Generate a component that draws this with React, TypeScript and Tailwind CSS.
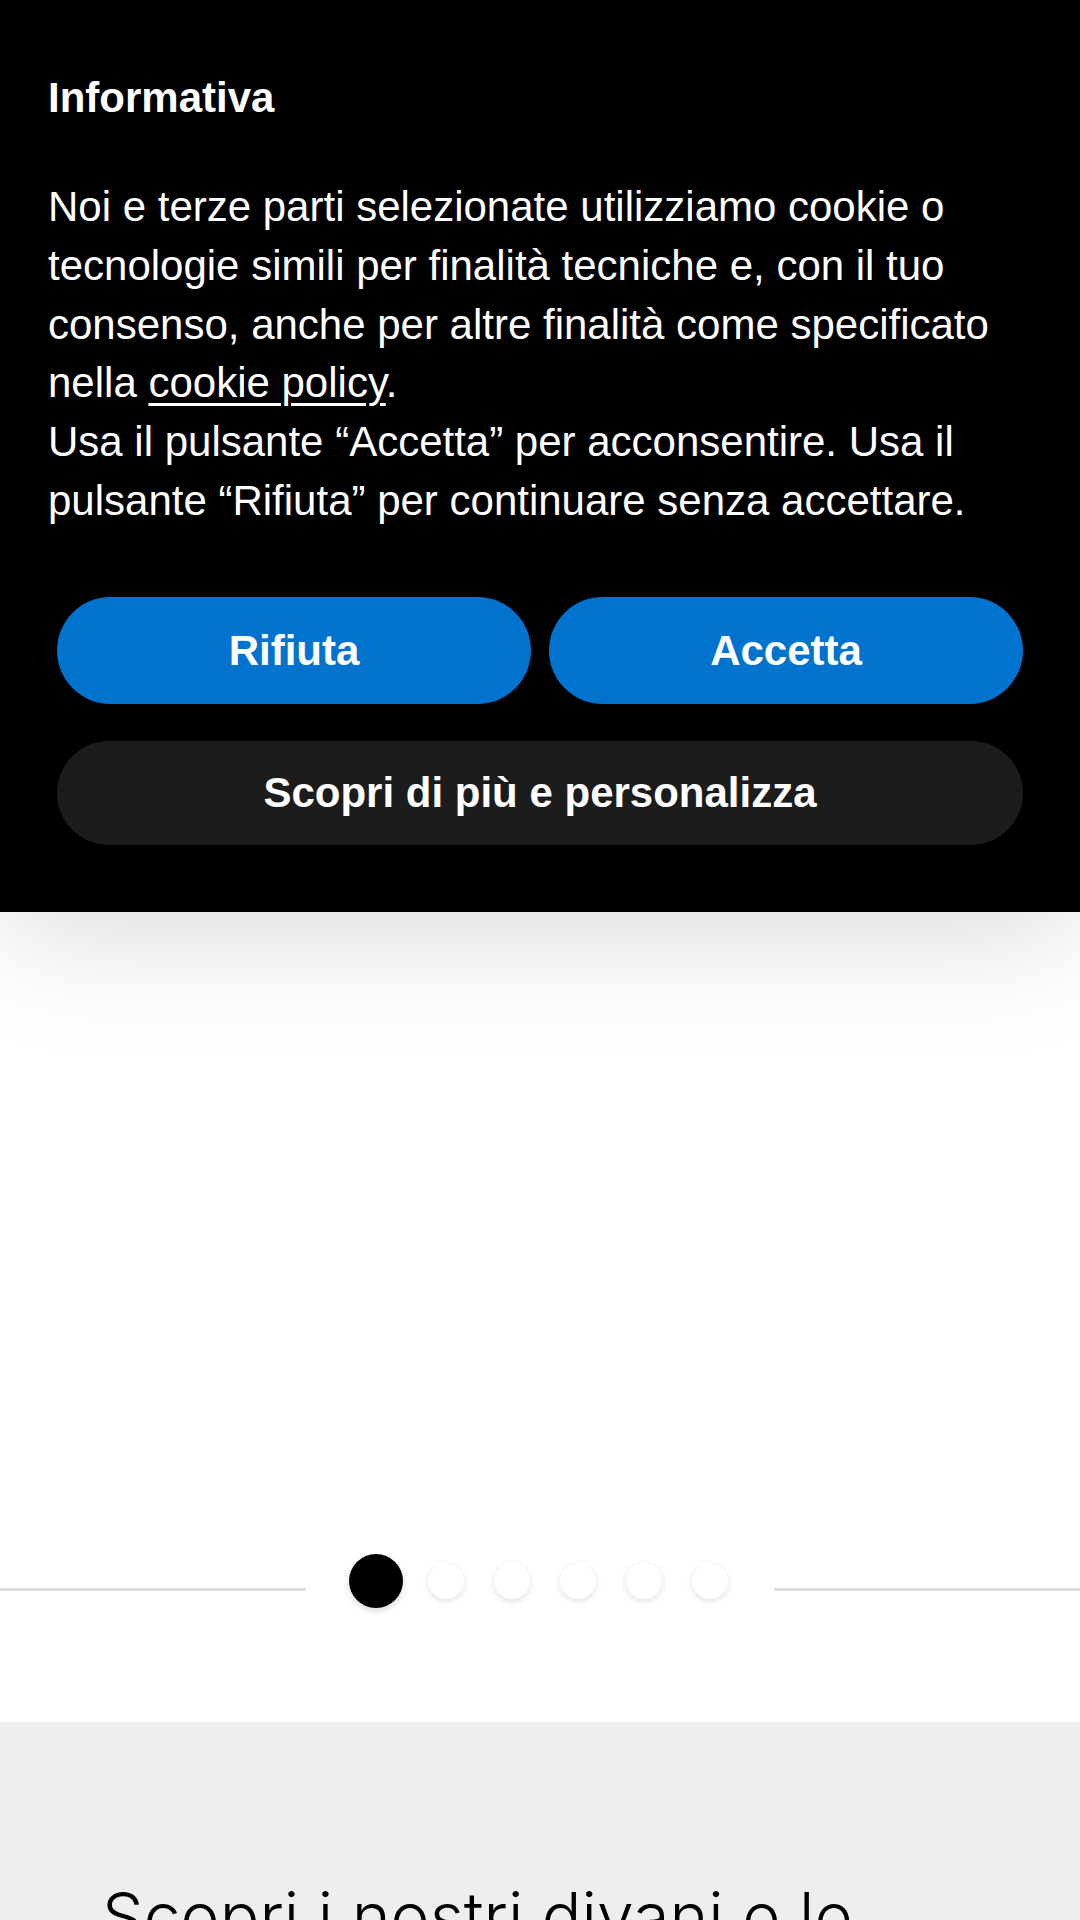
export default function App() {
  const dots = [0, 1, 2, 3, 4];

  return (
    <div className="w-[1080px] min-h-[1920px] bg-white overflow-hidden font-['Liberation_Sans',Arial,sans-serif]">
      {/* Cookie banner */}
      <section className="relative z-10 h-[912px] bg-black px-[48px] pt-[69px] text-white shadow-[0_20px_120px_rgba(0,0,0,0.15)]">
        <h2 className="text-[42px] font-bold leading-[58px]">Informativa</h2>
        <p className="mt-[51px] text-[42px] leading-[58.8px]">
          Noi e terze parti selezionate utilizziamo cookie o tecnologie simili
          per finalità tecniche e, con il tuo consenso, anche per altre
          finalità come specificato nella{" "}
          <a href="#" className="underline decoration-[3px] underline-offset-[6px]">
            cookie policy
          </a>
          .
          <br />
          Usa il pulsante “Accetta” per acconsentire. Usa il pulsante “Rifiuta”
          per continuare senza accettare.
        </p>

        {/* Actions */}
        <div className="mt-[66px] flex gap-[18px] px-[9px]">
          <button className="h-[107px] flex-1 rounded-full bg-[#0073ce] text-[42px] font-bold text-white">
            Rifiuta
          </button>
          <button className="h-[107px] flex-1 rounded-full bg-[#0073ce] text-[42px] font-bold text-white">
            Accetta
          </button>
        </div>
        <div className="mt-[37px] px-[9px]">
          <button className="h-[104px] w-full rounded-full bg-[#1c1c1c] text-[42px] font-bold text-white">
            Scopri di più e personalizza
          </button>
        </div>
      </section>

      {/* Carousel area */}
      <section className="flex h-[810px] flex-col justify-end pb-[114px]">
        <div className="flex h-[54px] items-center">
          <div className="mt-[16px] h-[3px] flex-1 bg-[#dddddd]" />
          <div className="flex items-center pl-[43px] pr-[46px]">
            <span className="h-[54px] w-[54px] rounded-full bg-black shadow-[0_3px_6px_rgba(0,0,0,0.15)]" />
            {dots.map((d) => (
              <span
                key={d}
                className={
                  d === 0
                    ? "ml-[25px] h-[36px] w-[36px] rounded-full bg-white shadow-[0_2px_6px_rgba(0,0,0,0.12)]"
                    : "ml-[30px] h-[36px] w-[36px] rounded-full bg-white shadow-[0_2px_6px_rgba(0,0,0,0.12)]"
                }
              />
            ))}
          </div>
          <div className="mt-[16px] h-[3px] flex-1 bg-[#dddddd]" />
        </div>
      </section>

      {/* Intro */}
      <section className="h-[400px] bg-[#eeeeee] px-[102px] pt-[158px]">
        <h3 className="font-['Inter',sans-serif] text-[66px] font-light leading-[72px] text-black">
          Scopri i nostri divani e le poltrone
        </h3>
      </section>
    </div>
  );
}
